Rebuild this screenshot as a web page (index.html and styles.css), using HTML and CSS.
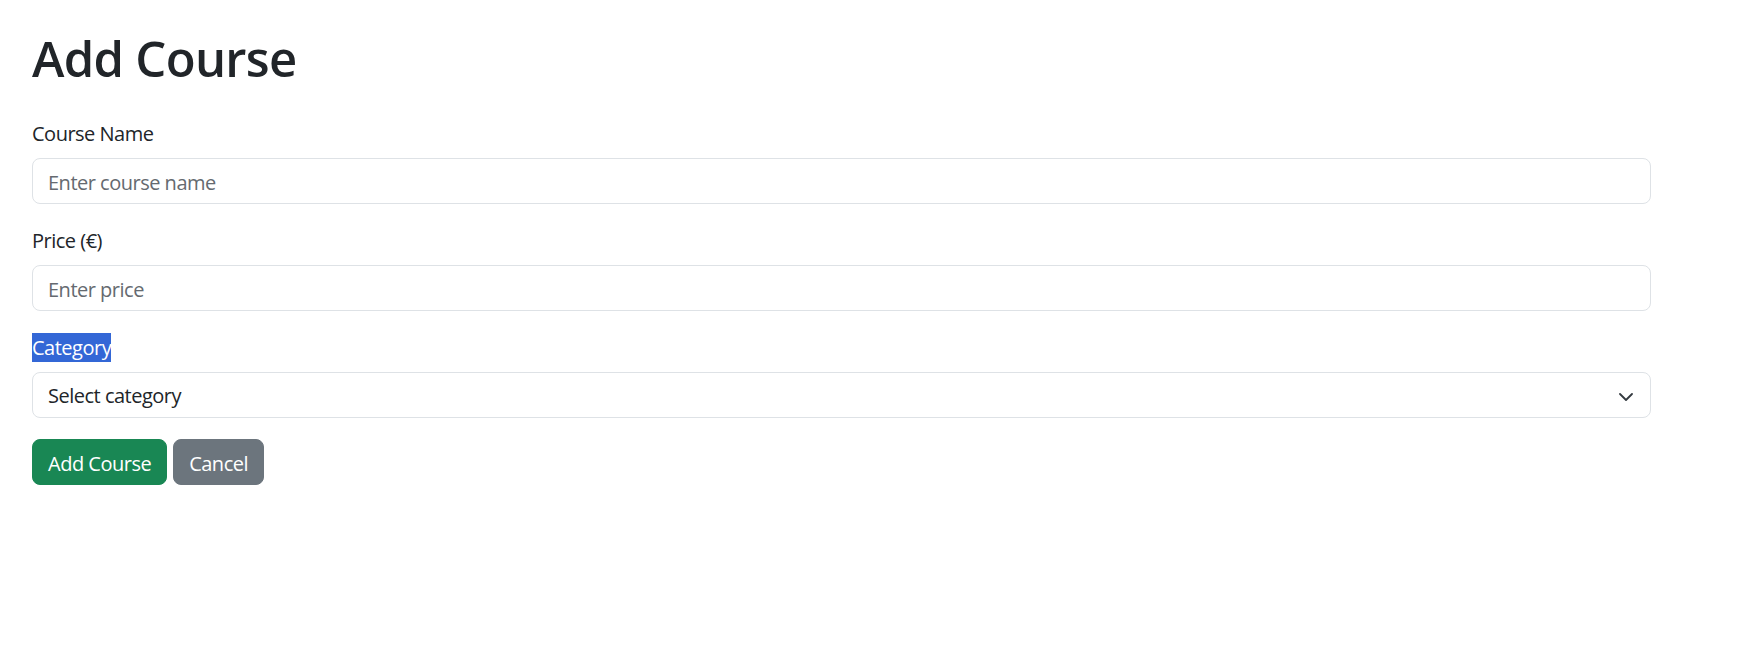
FILE: index.html
```html
<!DOCTYPE html>
<html lang="en">
<head>
<meta charset="utf-8">
<title>Add Course</title>
<link rel="stylesheet" href="styles.css">
</head>
<body>
<div class="container">
  <h1 class="title">Add Course</h1>
  <form class="course-form">
    <div class="field">
      <label class="field-label" for="name">Course Name</label>
      <input class="field-input" id="name" type="text" placeholder="Enter course name">
    </div>
    <div class="field">
      <label class="field-label" for="price">Price (€)</label>
      <input class="field-input" id="price" type="text" placeholder="Enter price">
    </div>
    <div class="field">
      <label class="field-label" for="cat"><span class="selected-text">Category</span></label>
      <div class="field-select" id="cat">
        <span class="select-value">Select category</span>
        <svg class="chevron" width="16" height="12" viewBox="0 0 16 12" aria-hidden="true"><path d="m2 5 6 6 6-6" fill="none" stroke="#343a40" stroke-width="1.8" stroke-linecap="round" stroke-linejoin="round"/></svg>
      </div>
    </div>
    <div class="actions">
      <button type="button" class="btn btn-success">Add Course</button>
      <button type="button" class="btn btn-secondary">Cancel</button>
    </div>
  </form>
</div>
</body>
</html>
```

FILE: styles.css
```css
* { box-sizing: border-box; }

html, body {
  margin: 0;
  padding: 0;
  background: #fff;
}

body {
  font-family: "Open Sans", "Noto Sans", sans-serif;
  font-size: 20px;
  line-height: 30px;
  letter-spacing: -0.5px;
  color: #212529;
}

.container {
  margin-left: 32px;
  width: 1619px;
  padding-top: 28px;
}

.title {
  margin: 0 0 30px 0;
  font-size: 49px;
  line-height: 60px;
  font-weight: 600;
  letter-spacing: -0.7px;
  color: #212529;
}

.course-form {
  display: flex;
  flex-direction: column;
}

.field {
  display: flex;
  flex-direction: column;
  margin-bottom: 21px;
}

.field-label {
  display: block;
  height: 30px;
  line-height: 30px;
  padding-top: 1px;
  margin-bottom: 10px;
  font-size: 20px;
}

.selected-text {
  background: #3367d6;
  color: #fff;
  display: inline-block;
  height: 29px;
  line-height: 29px;
}

.field-input {
  display: block;
  width: 100%;
  height: 46px;
  padding: 2px 15px 0 15px;
  font-family: inherit;
  font-size: 20px;
  letter-spacing: -0.5px;
  color: #212529;
  background: #fff;
  border: 1px solid #dee2e6;
  border-radius: 8px;
  outline: none;
}

.field-input::placeholder {
  color: #656a70;
  opacity: 1;
}

.field-select {
  display: flex;
  align-items: center;
  justify-content: space-between;
  height: 46px;
  padding: 2px 16px 0 15px;
  border: 1px solid #dee2e6;
  border-radius: 8px;
  background: #fff;
}

.select-value {
  color: #212529;
}

.chevron {
  display: block;
  margin-top: -2px;
}

.actions {
  display: flex;
  gap: 6px;
}

.btn {
  height: 46px;
  padding: 2px 15px 0 15px;
  font-family: inherit;
  font-size: 20px;
  letter-spacing: -0.5px;
  color: #fff;
  border: 1px solid transparent;
  border-radius: 8px;
  cursor: pointer;
}

.btn-success {
  background: #198754;
  border-color: #198754;
}

.btn-secondary {
  background: #6c757d;
  border-color: #6c757d;
}
```
